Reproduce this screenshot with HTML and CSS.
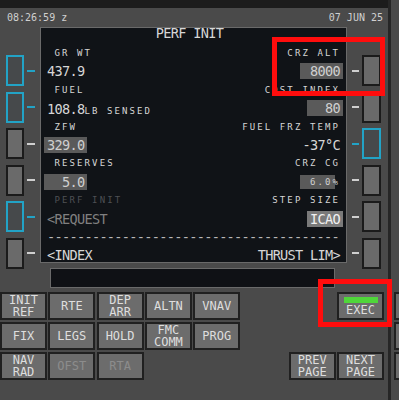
FILE: index.html
```html
<!DOCTYPE html>
<html lang="en">

<head>
    <meta charset="UTF-8">
    <meta name="viewport" content="width=device-width, initial-scale=1.0">
    <title>FMC - PERF INIT</title>
    <link rel="stylesheet" href="styles.css">
</head>

<body>
    <div class="cdu">
        <div class="topband"></div>
        <div class="header">
            <span>08:26:59 z</span>
            <span>07 JUN 25</span>
        </div>

        <div class="display">
            <!-- left line select keys -->
            <div class="lsk-col left">
                <div class="lsk cyan"><div class="btn"></div><div class="dash"></div></div>
                <div class="lsk cyan"><div class="btn"></div><div class="dash"></div></div>
                <div class="lsk"><div class="btn"></div><div class="dash"></div></div>
                <div class="lsk"><div class="btn"></div><div class="dash"></div></div>
                <div class="lsk cyan"><div class="btn"></div><div class="dash"></div></div>
                <div class="lsk"><div class="btn"></div><div class="dash"></div></div>
            </div>

            <div class="screen">
                <div class="title">PERF INIT</div>
                <div class="row"><span class="sm"> GR WT</span><span class="sm r">CRZ ALT</span></div>
                <div class="row"><span class="lg">437.9</span><span class="lg box r"> 8000</span></div>
                <div class="row"><span class="sm"> FUEL</span><span class="sm r">COST INDEX</span></div>
                <div class="row"><span><span class="lg">108.8</span><span class="sm">LB SENSED</span></span><span class="lg box r">  80</span></div>
                <div class="row"><span class="sm"> ZFW</span><span class="sm r">FUEL FRZ TEMP</span></div>
                <div class="row"><span class="lg box">329.0</span><span class="lg r">-37°C</span></div>
                <div class="row"><span class="sm"> RESERVES</span><span class="sm r">CRZ CG</span></div>
                <div class="row"><span class="lg box">  5.0</span><span class="sm box cg r">6.0%</span></div>
                <div class="row"><span class="sm dim"> PERF INIT</span><span class="sm r">STEP SIZE</span></div>
                <div class="row"><span class="lg muted">&lt;REQUEST</span><span class="lg box sel r">ICAO</span></div>
                <div class="row"><span class="lg dashes">---------------------------------------</span></div>
                <div class="row"><span class="lg">&lt;INDEX</span><span class="lg r">THRUST LIM&gt;</span></div>
            </div>

            <!-- right line select keys -->
            <div class="lsk-col right">
                <div class="lsk"><div class="dash"></div><div class="btn"></div></div>
                <div class="lsk"><div class="dash"></div><div class="btn"></div></div>
                <div class="lsk cyan"><div class="dash"></div><div class="btn"></div></div>
                <div class="lsk"><div class="dash"></div><div class="btn"></div></div>
                <div class="lsk"><div class="dash"></div><div class="btn"></div></div>
                <div class="lsk"><div class="dash"></div><div class="btn"></div></div>
            </div>
        </div>

        <div class="scratch"></div>

        <div class="keypad">
            <div class="keyrow">
                <div class="key">INIT<br>REF</div>
                <div class="key">RTE</div>
                <div class="key">DEP<br>ARR</div>
                <div class="key">ALTN</div>
                <div class="key">VNAV</div>
                <div class="key exec push"><div class="lamp"></div><div>EXEC</div></div>
            </div>
            <div class="keyrow">
                <div class="key">FIX</div>
                <div class="key">LEGS</div>
                <div class="key">HOLD</div>
                <div class="key">FMC<br>COMM</div>
                <div class="key">PROG</div>
            </div>
            <div class="keyrow">
                <div class="key">NAV<br>RAD</div>
                <div class="key dim">OFST</div>
                <div class="key dim">RTA</div>
                <div class="key push">PREV<br>PAGE</div>
                <div class="key">NEXT<br>PAGE</div>
            </div>
        </div>
    </div>

    <div class="edge">
        <div class="stub"></div>
        <div class="stub"></div>
        <div class="stub"></div>
    </div>

    <!-- red highlight marks -->
    <div class="mark mark-crz"></div>
    <div class="mark mark-exec"></div>
</body>

</html>
```

FILE: styles.css
```css
body {
    margin: 0;
    width: 399px;
    height: 400px;
    overflow: hidden;
    position: relative;
    display: flex;
    background: #4a4a4a;
    font-family: "DejaVu Sans Mono", monospace;
}

.cdu {
    width: 388px;
}

.topband {
    height: 8px;
    background: #1c1c1c;
}

.header {
    height: 19px;
    display: flex;
    justify-content: space-between;
    align-items: center;
    padding: 0 5px 0 7px;
    font-size: 10px;
    color: #d0d0d0;
}

/* display + line select keys */
.display {
    display: flex;
    height: 236px;
}

.lsk-col {
    width: 40px;
    padding-top: 28px;
    display: flex;
    flex-direction: column;
    gap: 5.6px;
}

.lsk-col.right {
    width: 41px;
}

.lsk {
    display: flex;
    align-items: center;
    flex: 0 0 31px;
}

.left .lsk {
    padding-left: 6px;
}

.btn {
    width: 18px;
    height: 31px;
    box-sizing: border-box;
    background: #6a6a6a;
    border: 2px solid #1b1b1b;
}

.right .btn {
    width: 19px;
}

.dash {
    width: 8px;
    height: 2px;
    margin-left: 3px;
    background: #cfcfcf;
}

.right .dash {
    width: 7px;
    margin: 0 3px 0 5px;
}

.lsk.cyan .btn {
    background: #46494b;
    border-color: #22a3c6;
}

.lsk.cyan .dash {
    background: #22a3c6;
}

.screen {
    width: 307px;
    box-sizing: border-box;
    background: #101317;
    border: 1px solid #6a6a6a;
    padding: 0 6px;
    color: #d6d6d6;
}

.title {
    font-size: 13.6px;
    letter-spacing: -0.7px;
    line-height: 11px;
    height: 11px;
    margin-bottom: 4.8px;
    text-align: center;
    padding-right: 8px;
}

.row {
    display: flex;
    justify-content: space-between;
    align-items: center;
    height: 18.4px;
    white-space: pre;
}

.r {
    margin-left: auto;
}

.lg {
    font-size: 13.6px;
    letter-spacing: -0.7px;
}

.sm {
    font-size: 9px;
    letter-spacing: 2.1px;
}

.dim {
    color: #4e5054;
}

.muted {
    color: #808080;
}

.dashes {
    color: #b8b8b8;
}

.box {
    display: inline-block;
    line-height: 16px;
    padding: 0 3px;
    background: #5a5a5a;
    color: #cfcfcf;
}

.row > .box:first-child {
    margin-left: -3px;
}

.row > .box.r {
    margin-right: -3px;
}

.box.cg {
    line-height: 14px;
    padding-left: 10px;
    background: linear-gradient(to right, #5a5a5a 35px, transparent 35px);
}

.box.sel {
    background: #7a7a7a;
    color: #f0f0f0;
}

/* scratchpad */
.scratch {
    margin: 5px 0 0 50px;
    width: 285px;
    height: 20px;
    box-sizing: border-box;
    background: #0f1115;
    border: 1px solid #6a6a6a;
}

/* keypad */
.keypad {
    margin-top: 4px;
    width: 384px;
    display: flex;
    flex-direction: column;
    gap: 2px;
}

.keyrow {
    display: flex;
    gap: 1.3px;
    height: 28px;
}

.key {
    width: 47px;
    box-sizing: border-box;
    background: #6c6c6c;
    border: 2px solid #202020;
    color: #dedede;
    font-size: 12px;
    line-height: 12.5px;
    display: flex;
    flex-direction: column;
    align-items: center;
    justify-content: center;
    text-align: center;
}

.key.dim {
    color: #8c8c8c;
}

.key.push {
    margin-left: auto;
}

.key.exec {
    justify-content: flex-start;
    padding-top: 3px;
}

.lamp {
    width: 34px;
    height: 6px;
    margin-bottom: 1px;
    background: #4fd63a;
}

/* right edge of the panel */
.edge {
    width: 11px;
    box-sizing: border-box;
    border-left: 3px solid #262626;
    padding-top: 292px;
    display: flex;
    flex-direction: column;
    gap: 2px;
}

.stub {
    height: 28px;
    margin-left: 3px;
    box-sizing: border-box;
    background: #6c6c6c;
    border: 2px solid #202020;
    border-right: 0;
}

.mark {
    position: absolute;
    box-sizing: border-box;
    border: 5px solid #ff0d0d;
}

.mark-crz {
    left: 272px;
    top: 37px;
    width: 113px;
    height: 59px;
}

.mark-exec {
    left: 318px;
    top: 279px;
    width: 74px;
    height: 48px;
}
```
